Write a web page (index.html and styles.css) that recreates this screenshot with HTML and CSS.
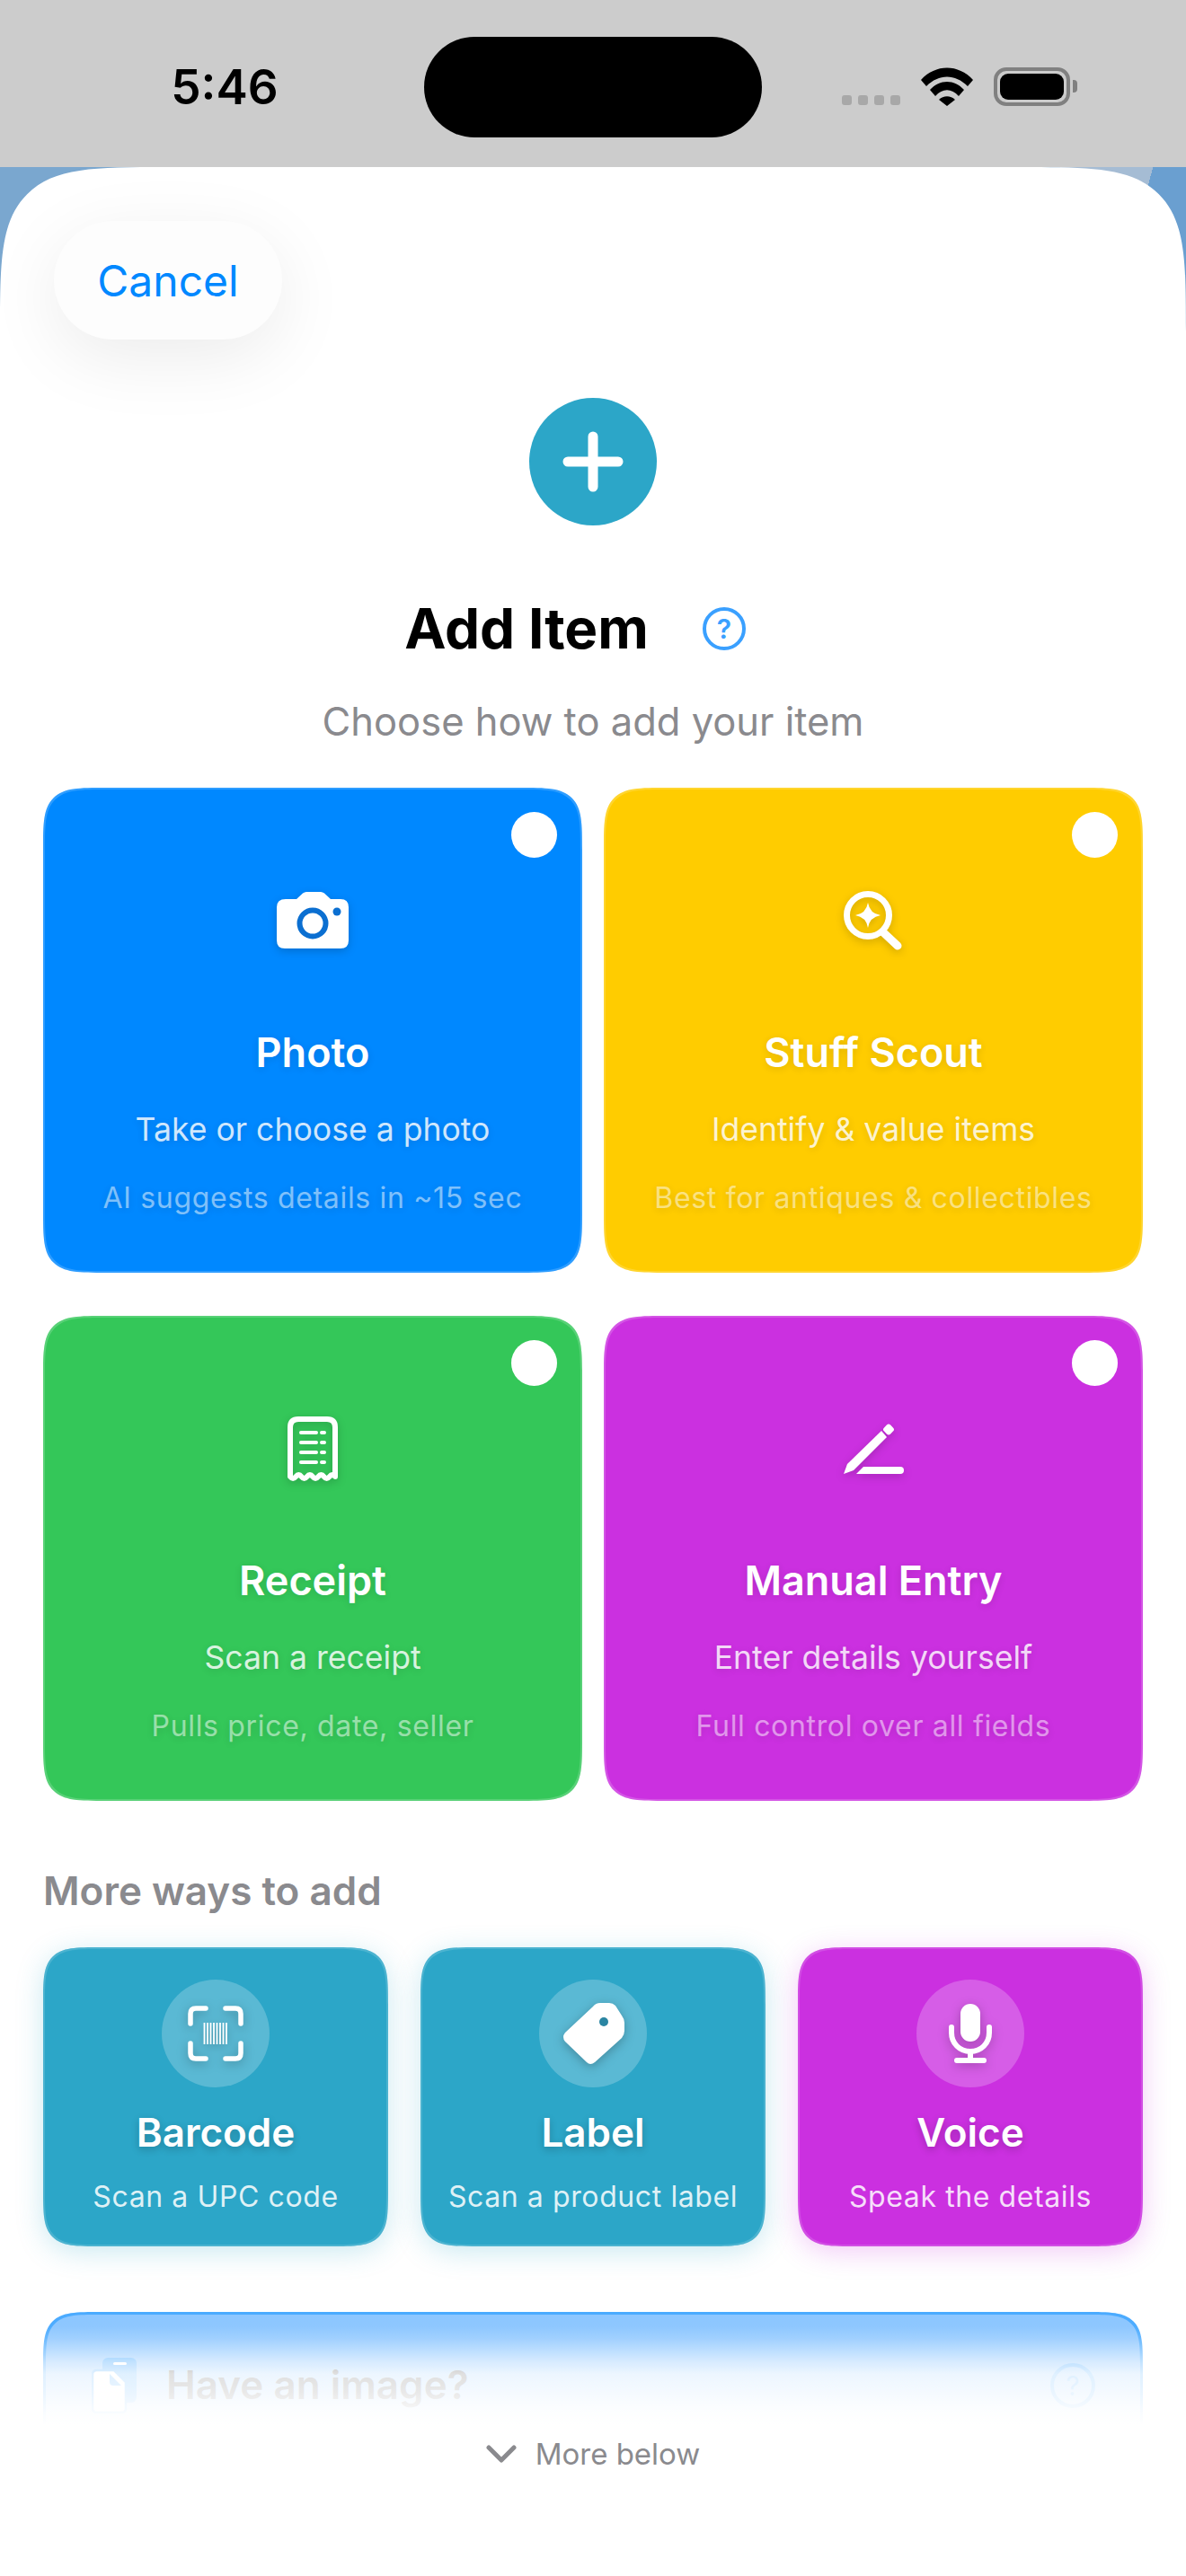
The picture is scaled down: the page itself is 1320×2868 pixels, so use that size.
FILE: index.html
```html
<!DOCTYPE html>
<html>
<head>
	<meta charset="utf-8">
	<title>Add Item</title>
	<link rel="stylesheet" href="styles.css">
</head>
<body>
	<div class="status-bar">
		<div class="status-time">5:46</div>
		<div class="island"></div>
		<div class="status-icons">
			<div class="signal"><span></span><span></span><span></span><span></span></div>
			<svg class="wifi" width="58" height="43" viewBox="0 0 58 43">
				<path d="M0 14 C16 -4 42 -4 58 14 L52 21 C38 7 20 7 6 21Z M10 25 C21 13 37 13 48 25 L42 32 C34 23 24 23 16 32Z M20 36 C25 31 33 31 38 36 L29 43Z" fill="#000"/>
			</svg>
			<div class="battery"><div class="battery-fill"></div></div>
			<div class="battery-cap"></div>
		</div>
	</div>

	<div class="backdrop">
		<div class="backdrop-patch"></div>
		<div class="sheet">
			<div class="cancel-row">
				<div class="cancel-btn">Cancel</div>
			</div>

			<div class="plus-circle">
				<svg width="68" height="68" viewBox="0 0 68 68">
					<path d="M34 6 V62 M6 34 H62" stroke="#fff" stroke-width="11" stroke-linecap="round"/>
				</svg>
			</div>

			<div class="title-row">
				<h1>Add Item</h1>
				<div class="help">?</div>
			</div>
			<div class="subtitle">Choose how to add your item</div>

			<div class="main-grid">
				<div class="card blue">
					<div class="dot"></div>
					<svg class="card-icon" width="80" height="64" viewBox="0 0 80 64">
						<path fill="#fff" d="M10 8 H22 L29 1.5 Q31 0 33 0 H49 Q51 0 53 1.5 L60 8 H71 Q80 8 80 17 V54 Q80 63 71 63 H9 Q0 63 0 54 V17 Q0 8 10 8Z"/>
						<circle cx="40" cy="35" r="14.5" fill="none" stroke="#0b6fd1" stroke-width="6"/>
						<circle cx="67" cy="22" r="4.5" fill="#0b6fd1"/>
					</svg>
					<div class="card-title">Photo</div>
					<div class="card-sub">Take or choose a photo</div>
					<div class="card-hint">AI suggests details in ~15 sec</div>
				</div>
				<div class="card yellow">
					<div class="dot"></div>
					<svg class="card-icon" width="66" height="66" viewBox="0 0 66 66">
						<circle cx="27" cy="27" r="23.5" fill="none" stroke="#fff" stroke-width="7"/>
						<path d="M44 46 L60 61" stroke="#fff" stroke-width="9" stroke-linecap="round"/>
						<path fill="#fff" d="M27 13 Q29 25 41 27 Q29 29 27 41 Q25 29 13 27 Q25 25 27 13Z"/>
					</svg>
					<div class="card-title">Stuff Scout</div>
					<div class="card-sub">Identify &amp; value items</div>
					<div class="card-hint">Best for antiques &amp; collectibles</div>
				</div>
				<div class="card green">
					<div class="dot"></div>
					<svg class="card-icon" width="56" height="72" viewBox="0 0 56 72">
						<path fill="none" stroke="#fff" stroke-width="6" stroke-linejoin="round" d="M3 67 V12 Q3 3 12 3 H44 Q53 3 53 12 V67 Q49.9 63 46.75 67 T40.5 67 T34.25 67 T28 67 T21.75 67 T15.5 67 T9.25 67 T3 67Z"/>
						<path stroke="#fff" stroke-width="4" stroke-linecap="round" d="M15 18 H32 M38 18 H41 M15 29 H32 M38 29 H41 M15 40 H32 M38 40 H41 M15 51 H32 M38 51 H41"/>
					</svg>
					<div class="card-title">Receipt</div>
					<div class="card-sub">Scan a receipt</div>
					<div class="card-hint">Pulls price, date, seller</div>
				</div>
				<div class="card purple">
					<div class="dot"></div>
					<svg class="card-icon" width="67" height="56" viewBox="0 0 67 56">
						<path fill="#fff" d="M42 8 L48 15 L11 52 L0 56 L4 45Z"/>
						<rect x="45" y="1.5" width="10" height="10" rx="3" fill="#fff" transform="rotate(45 50 6.5)"/>
						<path fill="#fff" d="M14 56 L22 48 H63 A4 4 0 0 1 63 56Z"/>
					</svg>
					<div class="card-title">Manual Entry</div>
					<div class="card-sub">Enter details yourself</div>
					<div class="card-hint">Full control over all fields</div>
				</div>
			</div>

			<div class="section-label">More ways to add</div>

			<div class="small-grid">
				<div class="small-card teal">
					<div class="small-icon">
						<svg width="62" height="62" viewBox="0 0 62 62">
							<path fill="none" stroke="#fff" stroke-width="5.5" stroke-linecap="round" d="M20 3 H9 Q3 3 3 9 V20 M42 3 H53 Q59 3 59 9 V20 M20 59 H9 Q3 59 3 53 V42 M42 59 H53 Q59 59 59 53 V42"/>
							<path stroke="#fff" stroke-width="1.8" d="M18.5 19 V43 M22 19 V43 M25.5 19 V43 M29 19 V43 M32.5 19 V43 M36 19 V43 M39.5 19 V43 M43 19 V43"/>
						</svg>
					</div>
					<div class="small-title">Barcode</div>
					<div class="small-sub">Scan a UPC code</div>
				</div>
				<div class="small-card teal">
					<div class="small-icon">
						<svg width="69" height="68" viewBox="0 0 69 68">
							<path fill="#fff" d="M34 4 Q37 0 42 0 H52 Q56 0 59 3 L66 14 Q69 18 69 22 V31 Q69 35 66 39 L36 66 Q31 70 27 66 L3 43 Q-1 38 3 33Z"/>
							<circle cx="46" cy="21" r="5" fill="#2a85a2"/>
						</svg>
					</div>
					<div class="small-title">Label</div>
					<div class="small-sub">Scan a product label</div>
				</div>
				<div class="small-card magenta">
					<div class="small-icon">
						<svg width="48" height="66" viewBox="0 0 48 66">
							<rect x="13" y="0" width="22" height="42" rx="11" fill="#fff"/>
							<path fill="none" stroke="#fff" stroke-width="6" stroke-linecap="round" d="M3 26 V32 C3 44 12 53 24 53 C36 53 45 44 45 32 V26 M24 53 V63 M9 63 H39"/>
						</svg>
					</div>
					<div class="small-title">Voice</div>
					<div class="small-sub">Speak the details</div>
				</div>
			</div>

			<div class="image-card">
				<svg class="image-icon" width="50" height="62" viewBox="0 0 50 62">
					<rect x="12" y="0" width="38" height="50" rx="6" fill="#0088ff"/>
					<rect x="24" y="5" width="15" height="3" rx="1.5" fill="#fff"/>
					<path d="M6 14 H25 L38 27 V56 Q38 61 33 61 H6 Q1 61 1 56 V19 Q1 14 6 14Z" fill="#fff" stroke="#0088ff" stroke-width="2.5"/>
					<path d="M20 18 L33 31 H24 Q20 31 20 27Z" fill="#0088ff"/>
				</svg>
				<div class="image-title">Have an image?</div>
				<div class="image-help">?</div>
			</div>

			<div class="fade"></div>
			<div class="more-below">
				<svg width="34" height="20" viewBox="0 0 34 20">
					<path d="M3 3 L17 17 L31 3" fill="none" stroke="#8a8a8e" stroke-width="5" stroke-linecap="round" stroke-linejoin="round"/>
				</svg>
				<span>More below</span>
			</div>
		</div>
	</div>
</body>
</html>
```

FILE: styles.css
```css
* {
	box-sizing: border-box;
}

html, body {
	margin: 0;
	padding: 0;
	height: 2868px;
	overflow: hidden;
	background: #fff;
	font-family: Inter, "Liberation Sans", sans-serif;
}

.status-bar {
	height: 186px;
	background: #cccccc;
	display: flex;
	align-items: flex-start;
}

.status-time {
	width: 472px;
	padding: 68px 0 0 28px;
	text-align: center;
	font-size: 53px;
	line-height: 58px;
	font-weight: 600;
	color: #000;
}

.island {
	width: 376px;
	height: 112px;
	margin-top: 41px;
	border-radius: 56px;
	background: #000;
}

.status-icons {
	display: flex;
	align-items: flex-start;
	padding: 75px 0 0 89px;
}

.signal {
	display: flex;
	gap: 7px;
	padding-top: 31px;
	margin-right: 23px;
}

.signal span {
	width: 11px;
	height: 11px;
	border-radius: 3px;
	background: #a8a8a8;
}

.wifi {
	margin-right: 23px;
}

.battery {
	width: 85px;
	height: 43px;
	border: 4px solid #808080;
	border-radius: 14px;
	padding: 3px;
}

.battery-fill {
	height: 100%;
	background: #000;
	border-radius: 9px;
}

.battery-cap {
	width: 5px;
	height: 14px;
	margin: 14px 0 0 3px;
	background: #808080;
	border-radius: 0 4px 4px 0;
}

.backdrop {
	height: 2682px;
	position: relative;
	background: #7aa7cf;
}

.backdrop-patch {
	position: absolute;
	top: 0;
	right: 0;
	width: 140px;
	height: 120px;
	background: linear-gradient(105deg, #a5bcd4 60%, #6a9fd0 60%);
}

.sheet {
	position: relative;
	height: 2682px;
	background: #fff;
	border-radius: 190px 190px 0 0;
	corner-shape: squircle;
	padding: 60px 48px 0 48px;
	overflow: hidden;
}

.cancel-row {
	display: flex;
}

.cancel-btn {
	width: 254px;
	height: 132px;
	margin-left: 12px;
	border-radius: 66px;
	background: #fdfdfd;
	box-shadow: 0 20px 80px rgba(0, 0, 0, 0.08);
	color: #0088ff;
	font-size: 48px;
	display: flex;
	align-items: center;
	justify-content: center;
}

.plus-circle {
	width: 142px;
	height: 142px;
	margin: 65px auto 0 auto;
	border-radius: 50%;
	background: #2ca6c8;
	display: flex;
	align-items: center;
	justify-content: center;
}

.title-row {
	display: flex;
	align-items: center;
	justify-content: center;
	gap: 60px;
	margin-top: 76px;
	height: 78px;
	padding-right: 40px;
}

h1 {
	margin: 0;
	font-size: 62px;
	line-height: 78px;
	font-weight: 700;
	color: #000;
}

.help {
	width: 48px;
	height: 48px;
	border: 4px solid #3aa0ff;
	border-radius: 50%;
	color: #3aa0ff;
	font-size: 30px;
	font-weight: 600;
	display: flex;
	align-items: center;
	justify-content: center;
}

.subtitle {
	margin-top: 37px;
	text-align: center;
	font-size: 43.5px;
	line-height: 54px;
	color: #8a8a8e;
}

.main-grid {
	display: grid;
	grid-template-columns: 600px 600px;
	grid-auto-rows: 540px;
	column-gap: 24px;
	row-gap: 48px;
	margin-top: 47px;
}

.card {
	position: relative;
	border-radius: 72px;
	corner-shape: squircle;
	display: flex;
	flex-direction: column;
	align-items: center;
	color: #fff;
	text-align: center;
	text-shadow: 0 2px 8px rgba(0, 0, 0, 0.12);
	box-shadow: inset 0 0 0 2px rgba(255, 255, 255, 0.18);
}

.blue { background: #0088ff; }
.yellow { background: #ffcc00; }
.green { background: #34c759; }
.purple { background: #cb30e0; }
.teal { background: #2ca6c8; }
.magenta { background: #cb30e0; }

.dot {
	position: absolute;
	top: 27px;
	right: 28px;
	width: 51px;
	height: 51px;
	border-radius: 50%;
	background: #fff;
}

.card-icon {
	height: 74px;
	margin-top: 111px;
	filter: drop-shadow(0 3px 5px rgba(0, 0, 0, 0.18));
}

.card-title {
	margin-top: 82px;
	font-size: 45px;
	line-height: 56px;
	font-weight: 600;
}

.card-sub {
	margin-top: 36px;
	font-size: 35.6px;
	line-height: 44px;
	color: rgba(255, 255, 255, 0.82);
}

.card-hint {
	margin-top: 32px;
	font-size: 32px;
	line-height: 44px;
	letter-spacing: 0.67px;
	color: rgba(255, 255, 255, 0.5);
}

.section-label {
	margin-top: 73px;
	font-size: 44px;
	line-height: 54px;
	font-weight: 600;
	color: #8a8a8e;
}

.small-grid {
	display: grid;
	grid-template-columns: 384px 384px 384px;
	column-gap: 36px;
	margin-top: 36px;
}

.small-card {
	height: 333px;
	border-radius: 66px;
	corner-shape: squircle;
	padding-top: 36px;
	display: flex;
	flex-direction: column;
	align-items: center;
	color: #fff;
}

.small-card.teal {
	box-shadow: 0 6px 30px rgba(44, 166, 200, 0.25), inset 0 0 0 2px rgba(255, 255, 255, 0.15);
}

.small-card.magenta {
	box-shadow: 0 6px 30px rgba(203, 48, 224, 0.25), inset 0 0 0 2px rgba(255, 255, 255, 0.15);
}

.small-icon {
	width: 120px;
	height: 120px;
	border-radius: 50%;
	background: rgba(255, 255, 255, 0.22);
	display: flex;
	align-items: center;
	justify-content: center;
}

.small-icon svg {
	filter: drop-shadow(0 3px 6px rgba(0, 0, 0, 0.25));
}

.small-title {
	margin-top: 22px;
	font-size: 44px;
	line-height: 56px;
	font-weight: 600;
	text-shadow: 0 3px 8px rgba(0, 0, 0, 0.22);
}

.small-sub {
	margin-top: 23px;
	font-size: 32px;
	line-height: 42px;
	letter-spacing: 0.6px;
	color: rgba(255, 255, 255, 0.85);
}

.image-card {
	margin-top: 73px;
	height: 200px;
	border: 3px solid #0088ff;
	border-radius: 66px;
	corner-shape: squircle;
	background: linear-gradient(#5dafff 30%, #b0d8ff 60%);
	display: flex;
	align-items: flex-start;
	padding: 48px 50px 0 51px;
	gap: 33px;
}

.image-title {
	font-size: 44px;
	line-height: 60px;
	font-weight: 600;
	color: #000;
	flex: 1;
}

.image-help {
	width: 50px;
	height: 50px;
	margin-top: 6px;
	border: 4px solid #0088ff;
	border-radius: 50%;
	color: #0088ff;
	font-size: 30px;
	display: flex;
	align-items: center;
	justify-content: center;
}

.fade {
	position: absolute;
	left: 0;
	right: 0;
	top: 2374px;
	bottom: 0;
	background: linear-gradient(to bottom,
		rgba(255, 255, 255, 0.29) 4.5%,
		rgba(255, 255, 255, 0.3) 9.7%,
		rgba(255, 255, 255, 0.41) 14%,
		rgba(255, 255, 255, 0.76) 22.7%,
		rgba(255, 255, 255, 0.88) 27%,
		rgba(255, 255, 255, 0.91) 33%,
		rgba(255, 255, 255, 0.975) 41.2%,
		#fff 45.5%);
}

.more-below {
	position: absolute;
	left: 0;
	right: 0;
	top: 2526px;
	display: flex;
	align-items: center;
	justify-content: center;
	gap: 21px;
	font-size: 33px;
	line-height: 40px;
	color: #8a8a8e;
}
```
